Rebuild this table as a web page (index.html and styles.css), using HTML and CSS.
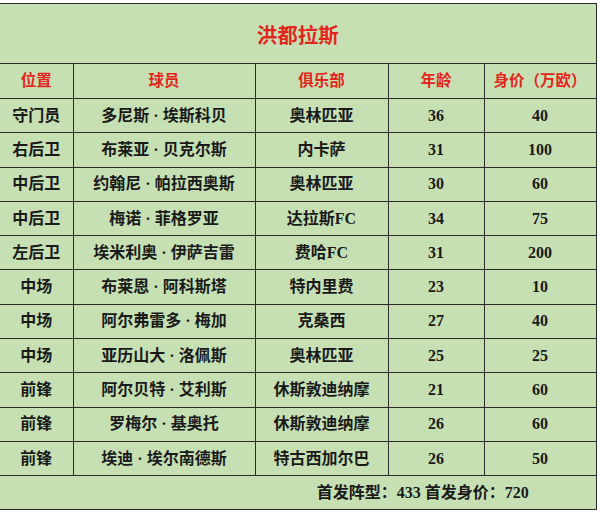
FILE: index.html
```html
<!DOCTYPE html>
<html lang="zh">
<head>
<meta charset="utf-8">
<title>洪都拉斯</title>
<link rel="stylesheet" href="styles.css">
</head>
<body>
<div class="sheet">
<table class="roster">
<colgroup>
<col class="c-pos"><col class="c-name"><col class="c-club"><col class="c-age"><col class="c-val">
</colgroup>
<tr class="title-row"><td colspan="5" class="title">洪都拉斯</td></tr>
<tr class="head-row"><th>位置</th><th>球员</th><th>俱乐部</th><th>年龄</th><th>身价（万欧）</th></tr>
<tr><td>守门员</td><td>多尼斯 · 埃斯科贝</td><td>奥林匹亚</td><td>36</td><td>40</td></tr>
<tr><td>右后卫</td><td>布莱亚 · 贝克尔斯</td><td>内卡萨</td><td>31</td><td>100</td></tr>
<tr><td>中后卫</td><td>约翰尼 · 帕拉西奥斯</td><td>奥林匹亚</td><td>30</td><td>60</td></tr>
<tr><td>中后卫</td><td>梅诺 · 菲格罗亚</td><td>达拉斯FC</td><td>34</td><td>75</td></tr>
<tr><td>左后卫</td><td>埃米利奥 · 伊萨吉雷</td><td>费哈FC</td><td>31</td><td>200</td></tr>
<tr><td>中场</td><td>布莱恩 · 阿科斯塔</td><td>特内里费</td><td>23</td><td>10</td></tr>
<tr><td>中场</td><td>阿尔弗雷多 · 梅加</td><td>克桑西</td><td>27</td><td>40</td></tr>
<tr><td>中场</td><td>亚历山大 · 洛佩斯</td><td>奥林匹亚</td><td>25</td><td>25</td></tr>
<tr><td>前锋</td><td>阿尔贝特 · 艾利斯</td><td>休斯敦迪纳摩</td><td>21</td><td>60</td></tr>
<tr><td>前锋</td><td>罗梅尔 · 基奥托</td><td>休斯敦迪纳摩</td><td>26</td><td>60</td></tr>
<tr><td>前锋</td><td>埃迪 · 埃尔南德斯</td><td>特古西加尔巴</td><td>26</td><td>50</td></tr>
<tr class="sum-row"><td colspan="5" class="summary">首发阵型：433 首发身价：720</td></tr>
</table>
</div>
</body>
</html>
```

FILE: styles.css
```css
html, body {
  margin: 0;
  padding: 0;
  background: #ffffff;
}
body {
  width: 600px;
  height: 513px;
  overflow: hidden;
}
.sheet {
  padding-top: 3px;
}
.roster {
  border-collapse: collapse;
  table-layout: fixed;
  width: 596px;
  background: #c6e0b4;
  font-family: "Liberation Serif", "Noto Sans CJK SC", serif;
  font-weight: 700;
  font-size: 16px;
  color: #1a1a1a;
}
.c-pos { width: 73px; }
.c-name { width: 182px; }
.c-club { width: 133px; }
.c-age { width: 96px; }
.c-val { width: 112px; }
.roster td, .roster th {
  border: 1px solid #2a2a2a;
  text-align: center;
  vertical-align: middle;
  padding: 0;
  height: 33.3px;
  line-height: 20px;
  white-space: nowrap;
}
.roster tr > :first-child {
  border-left: none;
}
.title-row td {
  height: 60px;
  padding-top: 4px;
  box-sizing: border-box;
  font-size: 20.5px;
  color: #e3261d;
}
.head-row th {
  height: 34px;
  font-size: 15.5px;
  color: #e3261d;
  font-weight: 700;
}
.sum-row td {
  height: 32.5px;
  padding-left: 250px;
}
```
